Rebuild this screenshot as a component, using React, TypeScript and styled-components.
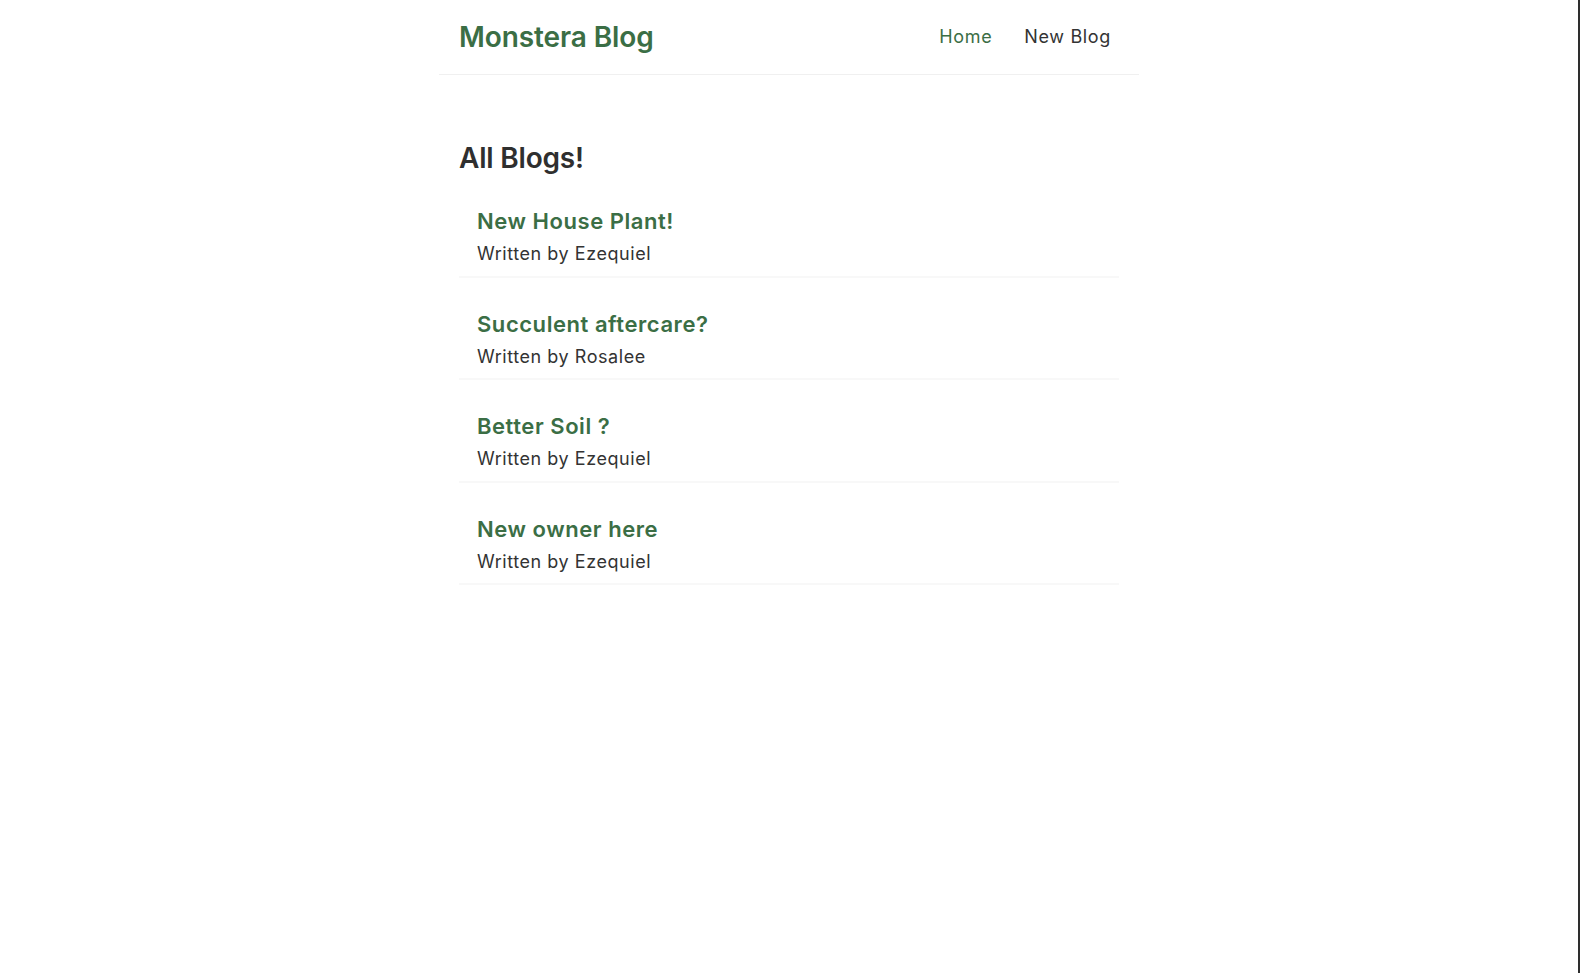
import React from "react";
import styled, { createGlobalStyle } from "styled-components";

const GlobalStyle = createGlobalStyle`
  html, body {
    margin: 0;
    padding: 0;
    background: #ffffff;
  }
  * {
    margin: 0;
    box-sizing: border-box;
    font-family: "Inter", "Open Sans", sans-serif;
    color: #333333;
  }
`;

const Frame = styled.div`
  display: flex;
  min-height: 100vh;
`;

const Page = styled.div`
  flex: 1;
  min-width: 0;
`;

const Edge = styled.div`
  width: 2px;
  background: #2e2e2e;
`;

const Navbar = styled.nav`
  display: flex;
  align-items: center;
  max-width: 700px;
  margin: 0 auto;
  padding: 20px 22px 20px 20px;
  border-bottom: 1px solid #f0f0f0;
`;

const Brand = styled.h1`
  font-size: 28px;
  line-height: 34px;
  font-weight: 600;
  color: #3b6e45;
  letter-spacing: -0.1px;
`;

const Links = styled.div`
  margin-left: auto;
  display: flex;
`;

const NavLink = styled.a<{ $active?: boolean }>`
  margin-left: 20px;
  padding: 6px;
  font-size: 18px;
  line-height: 22px;
  letter-spacing: 0.65px;
  text-decoration: none;
  color: ${(p) => (p.$active ? "#3b6e45" : "#333333")};
  cursor: pointer;
`;

const Content = styled.main`
  max-width: 700px;
  margin: 46px auto 40px;
  padding: 20px;
`;

const Heading = styled.h2`
  font-size: 28px;
  line-height: 34px;
  font-weight: 600;
  color: #2f2f2f;
  letter-spacing: -0.2px;
`;

const Preview = styled.div`
  padding: 11px 18px 10.5px;
  margin: 21px 0;
  border-bottom: 2px solid #f8f8f8;
`;

const PreviewTitle = styled.h2`
  font-size: 22px;
  line-height: 28px;
  font-weight: 600;
  color: #3b6e45;
  margin-bottom: 8px;
  letter-spacing: 0.55px;
`;

const Author = styled.p`
  font-size: 18px;
  line-height: 22px;
  letter-spacing: 0.55px;
  color: #333333;
`;

const blogs = [
  { id: 1, title: "New House Plant!", author: "Ezequiel" },
  { id: 2, title: "Succulent aftercare?", author: "Rosalee" },
  { id: 3, title: "Better Soil ?", author: "Ezequiel" },
  { id: 4, title: "New owner here", author: "Ezequiel" },
];

export default function App() {
  return (
    <>
      <GlobalStyle />
      <Frame>
        <Page>
          <Navbar>
            <Brand>Monstera Blog</Brand>
            <Links>
              <NavLink $active>Home</NavLink>
              <NavLink>New Blog</NavLink>
            </Links>
          </Navbar>
          <Content>
            <Heading>All Blogs!</Heading>
            {blogs.map((b) => (
              <Preview key={b.id}>
                <PreviewTitle>{b.title}</PreviewTitle>
                <Author>Written by {b.author}</Author>
              </Preview>
            ))}
          </Content>
        </Page>
        <Edge />
      </Frame>
    </>
  );
}
